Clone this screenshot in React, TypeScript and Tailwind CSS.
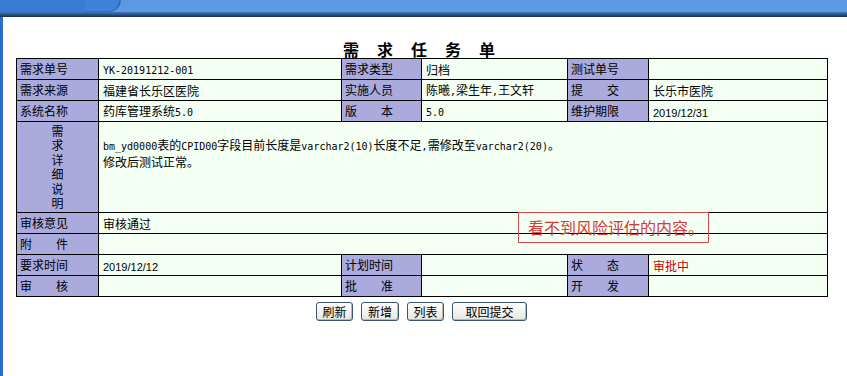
import React from "react";

const CJK = '"Noto Sans CJK SC", "Noto Sans", sans-serif';

function T({ text, sans }: { text: string; sans?: boolean }) {
  const parts = text.match(/[\x20-\x7e]+|[^\x20-\x7e]+/g) || [];
  return (
    <>
      {parts.map((p, i) =>
        /^[\x20-\x7e]+$/.test(p) ? (
          sans ? (
            <span key={i} className="text-[11px] leading-[14px]" style={{ fontFamily: '"Liberation Sans", Arial, sans-serif' }}>
              {p}
            </span>
          ) : (
            <span key={i} className="text-[10px] leading-[14px] whitespace-pre" style={{ fontFamily: '"DejaVu Sans Mono", monospace' }}>
              {p}
            </span>
          )
        ) : (
          <span key={i} className="text-[12px] leading-[14px]" style={{ fontFamily: CJK }}>
            {p}
          </span>
        )
      )}
    </>
  );
}

const L = ({ children }: { children: React.ReactNode }) => (
  <td className="bg-[#aaaadd] border border-black p-0 pl-[3px] text-[12px] leading-[14px] align-middle text-black whitespace-pre">
    {children}
  </td>
);

const V = ({ children, span, className = "" }: { children?: React.ReactNode; span?: number; className?: string }) => (
  <td colSpan={span} className={`bg-[#f4fff4] border border-black p-0 pl-[4px] leading-[14px] align-middle text-black ${className}`}>
    {children}
  </td>
);

const Btn = ({ children, w }: { children: React.ReactNode; w: string }) => (
  <button
    className={`${w} h-[19px] rounded-[3px] border border-[#3a5670] bg-gradient-to-b from-white to-[#e6e6e0] text-[12px] leading-[17px] text-black shadow-[inset_-1px_-1px_0_#b8b8b0]`}
    style={{ fontFamily: CJK }}
  >
    {children}
  </button>
);

export default function App() {
  return (
    <div className="relative w-[847px] h-[376px] bg-white overflow-hidden" style={{ fontFamily: CJK }}>
      {/* top bar */}
      <div className="flex h-[12px] bg-[#5d9be2]">
        <div className="w-[85px] h-full bg-[#3a7bd4]" />
        <div className="w-[36px] h-full bg-[#3f82d9] rounded-br-[14px] border-r-2 border-b border-[#2f6cc0]" />
        <div className="flex-1 h-full bg-[#5b9ae2]" />
      </div>
      <div className="h-[5px] bg-gradient-to-b from-[#3f78c0] via-[#2a5488] to-[#172f4c]" />

      <div className="relative flex">
        <div className="w-[3px] h-[359px] bg-[#2b6ccf]" />
        <div className="flex-1">
          <div className="pt-[20px] h-[41px] text-center">
            <span
              className="ml-[6px] text-[16px] leading-[20px] font-bold tracking-[18px] text-black"
              style={{ fontFamily: CJK }}
            >
              需求任务单
            </span>
          </div>
          <table className="ml-[13px] w-[811px] table-fixed border-collapse">
            <colgroup>
              <col className="w-[82px]" />
              <col className="w-[243px]" />
              <col className="w-[80px]" />
              <col className="w-[146px]" />
              <col className="w-[81px]" />
              <col className="w-[179px]" />
            </colgroup>
            <tbody>
              <tr className="h-[21px]">
                <L>需求单号</L>
                <V><T text="YK-20191212-001" /></V>
                <L>需求类型</L>
                <V><T text="归档" /></V>
                <L>测试单号</L>
                <V />
              </tr>
              <tr className="h-[21px]">
                <L>需求来源</L>
                <V><T text="福建省长乐区医院" /></V>
                <L>实施人员</L>
                <V><T text="陈曦,梁生年,王文轩" /></V>
                <L>提　　交</L>
                <V><T text="长乐市医院" /></V>
              </tr>
              <tr className="h-[21px]">
                <L>系统名称</L>
                <V><T text="药库管理系统5.0" /></V>
                <L>版　　本</L>
                <V><T text="5.0" /></V>
                <L>维护期限</L>
                <V><T text="2019/12/31" sans /></V>
              </tr>
              <tr className="h-[91px]">
                <td className="bg-[#aaaadd] border border-black p-0 text-center align-middle text-[12px] leading-[14.5px] text-black">
                  需<br />求<br />详<br />细<br />说<br />明
                </td>
                <td colSpan={5} className="bg-[#f4fff4] border border-black p-0 pl-[4px] pt-[15px] align-top leading-[13px] text-black">
                  <T text="bm_yd0000表的CPID00字段目前长度是varchar2(10)长度不足,需修改至varchar2(20)。" />
                  <br />
                  <T text="修改后测试正常。" />
                </td>
              </tr>
              <tr className="h-[21px]">
                <L>审核意见</L>
                <V span={5}><T text="审核通过" /></V>
              </tr>
              <tr className="h-[21px]">
                <L>附　　件</L>
                <V span={5} />
              </tr>
              <tr className="h-[21px]">
                <L>要求时间</L>
                <V><T text="2019/12/12" sans /></V>
                <L>计划时间</L>
                <V />
                <L>状　　态</L>
                <V><span className="text-[12px] leading-[14px] text-[#cc0000]" style={{ fontFamily: CJK }}>审批中</span></V>
              </tr>
              <tr className="h-[21px]">
                <L>审　　核</L>
                <V />
                <L>批　　准</L>
                <V />
                <L>开　　发</L>
                <V />
              </tr>
            </tbody>
          </table>
          <div className="mt-[5px] ml-[13px] w-[811px] flex justify-center gap-[8px]">
            <Btn w="w-[37px]">刷新</Btn>
            <Btn w="w-[38px]">新增</Btn>
            <Btn w="w-[37px]">列表</Btn>
            <Btn w="w-[75px]">取回提交</Btn>
          </div>
        </div>
      </div>

      {/* annotation box */}
      <div
        className="absolute left-[518px] top-[212px] w-[191px] h-[31px] border border-[#d24a4a] pl-[9px] text-[16px] leading-[29px] text-[#d23a3a]"
        style={{ fontFamily: CJK }}
      >
        看不到风险评估的内容。
      </div>
    </div>
  );
}
